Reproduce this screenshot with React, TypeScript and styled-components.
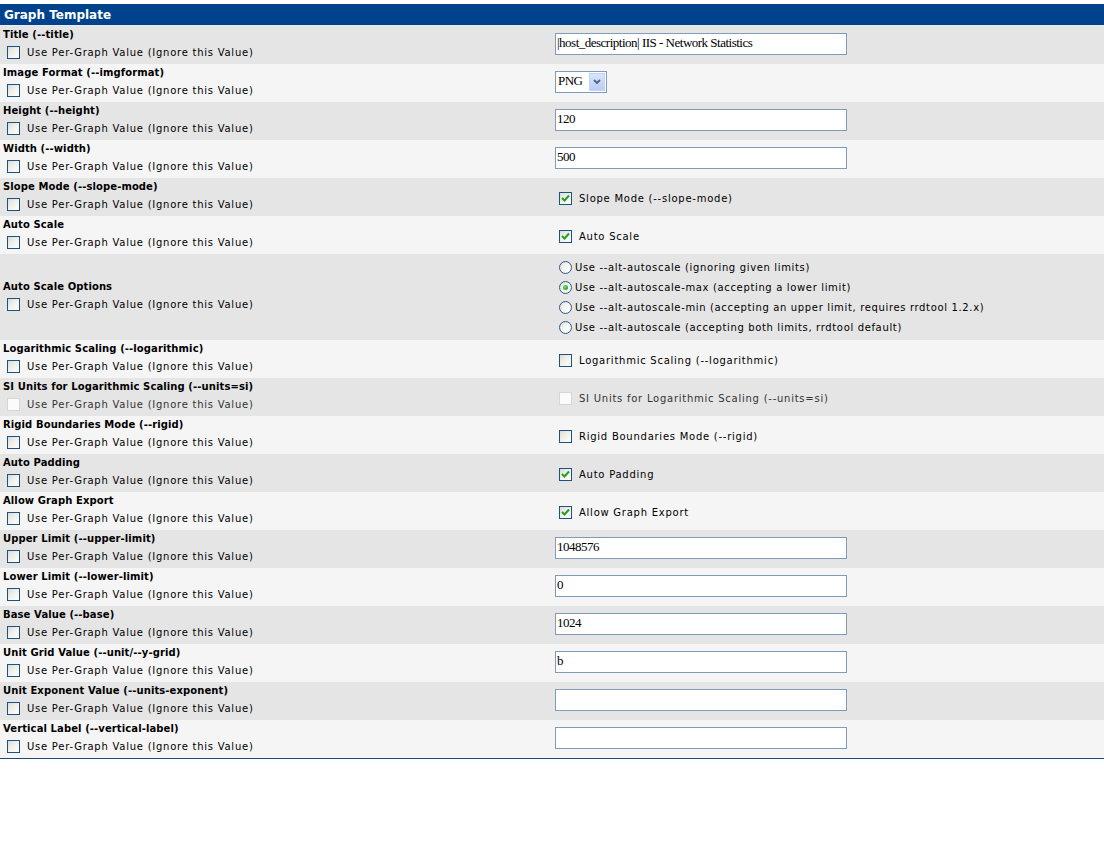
import React from "react";
import styled, { createGlobalStyle } from "styled-components";

const Global = createGlobalStyle`
  html, body { margin: 0; padding: 0; background: #ffffff; }
  body { font-family: Verdana, "DejaVu Sans", sans-serif; font-size: 10px; color: #000; }
`;

const Table = styled.div`
  margin-top: 4px;
  width: 100%;
  border-bottom: 1px solid #1f4775;
`;

const Header = styled.div`
  background: #00438c;
  color: #ffffff;
  font-family: Verdana, "DejaVu Sans", sans-serif;
  font-weight: bold;
  font-size: 12px;
  height: 21px;
  line-height: 22px;
  padding-left: 4px;
  border-bottom: 1px solid #e8ecf0;
`;

const Row = styled.div<{ $alt: boolean; $h?: number }>`
  display: grid;
  grid-template-columns: 552px 1fr;
  height: ${(p) => p.$h ?? 38}px;
  background: ${(p) => (p.$alt ? "#f5f5f5" : "#e5e5e5")};
  box-sizing: border-box;
`;

const LeftCell = styled.div`
  display: flex;
  flex-direction: column;
  justify-content: center;
  padding-left: 3px;
  padding-top: 2px;
`;

const RightCell = styled.div<{ $shift: number }>`
  display: flex;
  flex-direction: column;
  justify-content: center;
  padding-left: 3px;
  padding-top: ${(p) => Math.max(p.$shift, 0)}px;
  padding-bottom: ${(p) => Math.max(-p.$shift, 0)}px;
`;

const Label = styled.div`
  font-weight: bold;
  font-size: 10px;
  line-height: 14px;
  height: 14px;
  margin-top: -2px;
  letter-spacing: 0.1px;
`;

const CheckLine = styled.label`
  display: flex;
  align-items: center;
  height: 19px;
  font-size: 10px;
  padding-left: 4px;
  margin-top: 1px;
`;

const Box = styled.span<{ $disabled?: boolean }>`
  width: 11px;
  height: 11px;
  border: 1px solid ${(p) => (p.$disabled ? "#d8d6cc" : "#1c5180")};
  background: ${(p) =>
    p.$disabled
      ? "#fbfbfb"
      : "linear-gradient(135deg, #dcdcd6 0%, #f0f0ea 45%, #ffffff 100%)"};
  display: inline-flex;
  align-items: center;
  justify-content: center;
  margin-right: 7px;
  flex: none;
`;

const CheckText = styled.span<{ $disabled?: boolean }>`
  color: ${(p) => (p.$disabled ? "#333" : "#000")};
  white-space: nowrap;
  letter-spacing: 0.75px;
`;

const TextInput = styled.div`
  width: 292px;
  height: 22px;
  box-sizing: border-box;
  border: 1px solid #7f9db9;
  background: #ffffff;
  font-family: "Liberation Serif", "Noto Sans CJK TC", serif;
  font-size: 13px;
  line-height: 17px;
  padding-left: 1px;
  white-space: nowrap;
  overflow: hidden;
  letter-spacing: -0.5px;
`;

const Select = styled.div`
  width: 52px;
  height: 22px;
  box-sizing: border-box;
  border: 1px solid #7f9db9;
  background: #fff;
  display: flex;
  align-items: center;
  font-family: "Liberation Serif", serif;
  font-size: 13px;
  padding-left: 2px;
`;

const SelectText = styled.span`
  flex: 1;
  letter-spacing: -0.5px;
  margin-top: -3px;
`;

const SelectButton = styled.span`
  width: 16px;
  height: 18px;
  margin-right: 1px;
  background: linear-gradient(180deg, #d7e4fb 0%, #b8cdf6 100%);
  border: 1px solid #c3d3fd;
  box-sizing: border-box;
  display: flex;
  align-items: center;
  justify-content: center;
`;

const RadioGroup = styled.div`
  display: flex;
  flex-direction: column;
  padding-left: 4px;
`;

const RadioLine = styled.label`
  display: flex;
  align-items: center;
  height: 20px;
  font-size: 10px;
  white-space: nowrap;
  letter-spacing: 0.65px;
`;

const RadioCircle = styled.span`
  width: 11px;
  height: 11px;
  border-radius: 50%;
  border: 1px solid #2b5a89;
  background: radial-gradient(circle at 65% 65%, #ffffff 0%, #f2f2ee 50%, #d6d6cf 100%);
  display: inline-flex;
  align-items: center;
  justify-content: center;
  margin-right: 3px;
  flex: none;
`;

const RadioDot = styled.span`
  width: 5px;
  height: 5px;
  border-radius: 50%;
  background: radial-gradient(circle at 40% 40%, #7ee07e 0%, #21a121 70%);
`;

const Tick = () => (
  <svg width="9" height="9" viewBox="0 0 9 9">
    <path d="M1 4 L3.5 6.5 L8 1.5" stroke="#21a121" strokeWidth="2" fill="none" />
  </svg>
);

const Arrow = () => (
  <svg width="8" height="6" viewBox="0 0 8 6">
    <path d="M1 1 L4 4 L7 1" stroke="#4d6185" strokeWidth="1.8" fill="none" />
  </svg>
);

const Check = ({ checked, disabled, text }: { checked?: boolean; disabled?: boolean; text: string }) => (
  <CheckLine>
    <Box $disabled={disabled}>{checked ? <Tick /> : null}</Box>
    <CheckText $disabled={disabled}>{text}</CheckText>
  </CheckLine>
);

type Field =
  | { kind: "text"; value: string }
  | { kind: "select"; value: string }
  | { kind: "check"; checked: boolean; text: string; disabled?: boolean }
  | { kind: "radios"; options: string[]; selected: number };

interface Item {
  label: string;
  field: Field;
  disabled?: boolean;
  height?: number;
}

const items: Item[] = [
  { label: "Title (--title)", field: { kind: "text", value: "|host_description| IIS - Network Statistics" } },
  { label: "Image Format (--imgformat)", field: { kind: "select", value: "PNG" } },
  { label: "Height (--height)", field: { kind: "text", value: "120" } },
  { label: "Width (--width)", field: { kind: "text", value: "500" } },
  { label: "Slope Mode (--slope-mode)", field: { kind: "check", checked: true, text: "Slope Mode (--slope-mode)" } },
  { label: "Auto Scale", field: { kind: "check", checked: true, text: "Auto Scale" } },
  {
    label: "Auto Scale Options",
    height: 86,
    field: {
      kind: "radios",
      selected: 1,
      options: [
        "Use --alt-autoscale (ignoring given limits)",
        "Use --alt-autoscale-max (accepting a lower limit)",
        "Use --alt-autoscale-min (accepting an upper limit, requires rrdtool 1.2.x)",
        "Use --alt-autoscale (accepting both limits, rrdtool default)",
      ],
    },
  },
  { label: "Logarithmic Scaling (--logarithmic)", field: { kind: "check", checked: false, text: "Logarithmic Scaling (--logarithmic)" } },
  {
    label: "SI Units for Logarithmic Scaling (--units=si)",
    disabled: true,
    field: { kind: "check", checked: false, disabled: true, text: "SI Units for Logarithmic Scaling (--units=si)" },
  },
  { label: "Rigid Boundaries Mode (--rigid)", field: { kind: "check", checked: false, text: "Rigid Boundaries Mode (--rigid)" } },
  { label: "Auto Padding", field: { kind: "check", checked: true, text: "Auto Padding" } },
  { label: "Allow Graph Export", field: { kind: "check", checked: true, text: "Allow Graph Export" } },
  { label: "Upper Limit (--upper-limit)", field: { kind: "text", value: "1048576" } },
  { label: "Lower Limit (--lower-limit)", field: { kind: "text", value: "0" } },
  { label: "Base Value (--base)", field: { kind: "text", value: "1024" } },
  { label: "Unit Grid Value (--unit/--y-grid)", field: { kind: "text", value: "b" } },
  { label: "Unit Exponent Value (--units-exponent)", field: { kind: "text", value: "" } },
  { label: "Vertical Label (--vertical-label)", field: { kind: "text", value: "" } },
];

const shiftFor = (f: Field) => (f.kind === "text" || f.kind === "select" ? -2 : 1);

const renderField = (f: Field) => {
  switch (f.kind) {
    case "text":
      return <TextInput>{f.value}</TextInput>;
    case "select":
      return (
        <Select>
          <SelectText>{f.value}</SelectText>
          <SelectButton>
            <Arrow />
          </SelectButton>
        </Select>
      );
    case "check":
      return <Check checked={f.checked} disabled={f.disabled} text={f.text} />;
    case "radios":
      return (
        <RadioGroup>
          {f.options.map((o, i) => (
            <RadioLine key={o}>
              <RadioCircle>{i === f.selected ? <RadioDot /> : null}</RadioCircle>
              {o}
            </RadioLine>
          ))}
        </RadioGroup>
      );
  }
};

export default function App() {
  return (
    <>
      <Global />
      <Table>
        <Header>Graph Template</Header>
        {items.map((it, i) => (
          <Row key={it.label} $alt={i % 2 === 1} $h={it.height}>
            <LeftCell>
              <Label>{it.label}</Label>
              <Check disabled={it.disabled} text="Use Per-Graph Value (Ignore this Value)" />
            </LeftCell>
            <RightCell $shift={shiftFor(it.field)}>{renderField(it.field)}</RightCell>
          </Row>
        ))}
      </Table>
    </>
  );
}
